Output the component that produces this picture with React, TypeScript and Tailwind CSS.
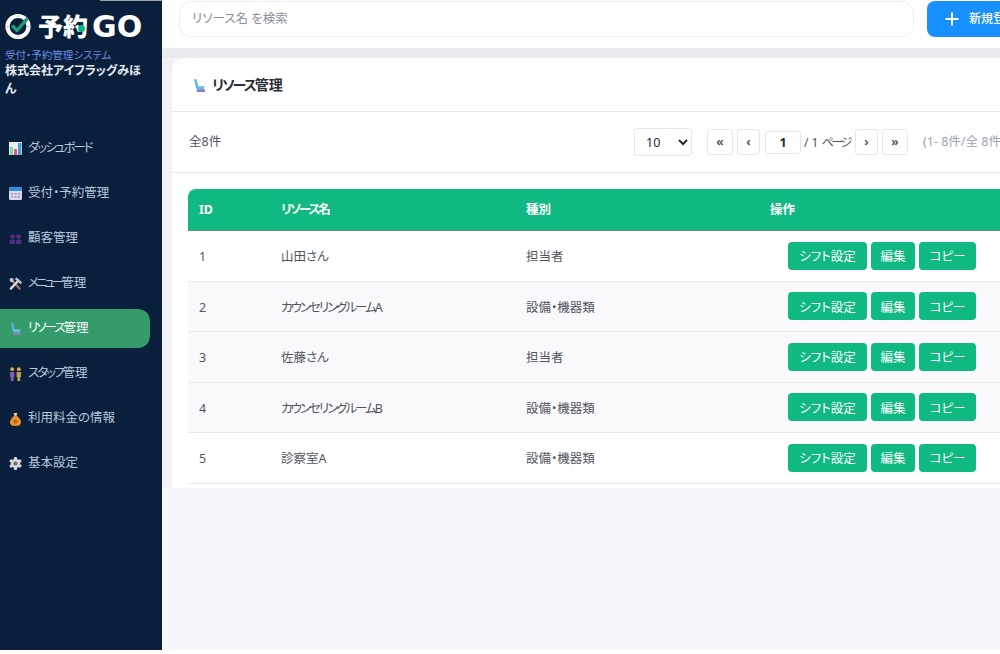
import { ReactNode } from "react";

const font = "font-['Noto_Sans','Noto_Sans_CJK_JP',sans-serif] [font-feature-settings:'palt']";

// kana in the original font is much narrower than in Noto
const Kana = ({ children }: { children: ReactNode }) => <span className="tracking-[-2px]">{children}</span>;

const ChartIcon = () => (
  <svg width="13" height="13" viewBox="0 0 13 13">
    <rect width="13" height="13" fill="#e8eef5" />
    <rect x="1" y="5" width="3" height="8" fill="#7ed6a0" />
    <rect x="5" y="7" width="3" height="6" fill="#ef4f7d" />
    <rect x="9" y="1" width="3.5" height="12" fill="#4a9bd8" />
  </svg>
);

const CalendarIcon = () => (
  <svg width="13" height="13" viewBox="0 0 13 13">
    <rect width="13" height="13" rx="1.5" fill="#d9d8ee" />
    <path d="M0 1.5A1.5 1.5 0 0 1 1.5 0h10A1.5 1.5 0 0 1 13 1.5V4H0z" fill="#2f8fe0" />
    <path d="M2 6h2v1.500H2zM5.500 6h2v1.500h-2zM9 6h2v1.500H9zM2 9h2v1.500H2zM5.500 9h2v1.500h-2zM9 9h2v1.500H9z" fill="#a98fc4" />
  </svg>
);

const PeopleIcon = () => (
  <svg width="13" height="13" viewBox="0 0 13 13" fill="#4f2f86">
    <circle cx="3.500" cy="4.500" r="2.300" />
    <circle cx="9.500" cy="4.500" r="2.300" />
    <path d="M0.500 12V9.500Q0.500 7.500 3 7.500h1Q6 7.500 6 9.500V12zM7 12V9.500Q7 7.500 9 7.500h1q2.500 0 2.500 2V12z" />
  </svg>
);

const ToolsIcon = () => (
  <svg width="14" height="14" viewBox="0 0 14 14" fill="none" strokeLinecap="round">
    <path d="M2.500 2.500 11.500 12" stroke="#a9777a" strokeWidth="2.400" />
    <path d="M2 12 10 3.500" stroke="#d8d8dc" strokeWidth="2.600" />
    <path d="M8 1.500 12.500 5.500" stroke="#c4c4cc" strokeWidth="2.600" />
    <circle cx="2.800" cy="2.800" r="2.200" fill="#c8c8d0" />
  </svg>
);

const SeatIcon = ({ size = 13 }: { size?: number }) => (
  <svg width={size} height={size} viewBox="0 0 13 13" fill="none">
    <path d="M2 1.500 4 1 6 8h5v2.500H5Q4 10.500 3.700 9z" fill="#58b8e6" />
    <path d="M4.500 10.500H12V13H4.500z" fill="#8c7fc0" />
    <path d="M6 7.500h5.500v1.500H6z" fill="#7cc4dc" />
  </svg>
);

const CoupleIcon = () => (
  <svg width="13" height="14" viewBox="0 0 13 14">
    <circle cx="3.200" cy="2.200" r="1.900" fill="#e0a850" />
    <circle cx="9.800" cy="2.200" r="1.900" fill="#e0a850" />
    <path d="M1 5h4.400v5H4.600v4H1.800v-4H1z" fill="#7a62a8" />
    <path d="M7.600 5H12v5h-.8v4H8.400v-4h-.8z" fill="#b9a24e" />
  </svg>
);

const MoneyIcon = () => (
  <svg width="13" height="14" viewBox="0 0 13 14">
    <path d="M4.500 1h4L7.500 4h-2z" fill="#e8c78a" />
    <path d="M5 4h3q4 3 4 6.500Q12 14 6.500 14T1 10.500Q1 7 5 4z" fill="#e9902c" />
    <circle cx="6.500" cy="9.500" r="2" fill="#b8601a" />
  </svg>
);

const GearIcon = () => (
  <svg width="13" height="13" viewBox="0 0 13 13">
    <g fill="#d5d5da">
      <circle cx="6.500" cy="6.500" r="4.700" />
      <rect x="5" y="0" width="3" height="13" rx="0.800" />
      <rect x="5" y="0" width="3" height="13" rx="0.800" transform="rotate(60 6.500 6.500)" />
      <rect x="5" y="0" width="3" height="13" rx="0.800" transform="rotate(120 6.500 6.500)" />
    </g>
    <circle cx="6.500" cy="6.500" r="2" fill="#6b6b75" />
  </svg>
);

const LogoMark = () => (
  <svg width="26" height="27" viewBox="0 0 26 27" fill="none" className="shrink-0">
    <circle cx="13" cy="13.500" r="10.500" stroke="#ffffff" strokeWidth="4.200" />
    <path d="M13 2.500v1.500M13 23v1.500M2 13.500h1.500M22.500 13.500H24" stroke="#8fa0b3" strokeWidth="1" />
    <path d="M8 13.500l4 4L21.500 6.500" stroke="#1f9a73" strokeWidth="3.400" strokeLinecap="round" strokeLinejoin="round" />
  </svg>
);

const menu: { key: string; label: ReactNode; icon: ReactNode; active?: boolean }[] = [
  { key: "dashboard", label: <Kana>ダッシュボード</Kana>, icon: <ChartIcon /> },
  { key: "reserve", label: "受付・予約管理", icon: <CalendarIcon /> },
  { key: "customer", label: "顧客管理", icon: <PeopleIcon /> },
  { key: "menu", label: <><span className="tracking-[-3px]">メニュー</span>管理</>, icon: <ToolsIcon /> },
  { key: "resource", label: <><Kana>リソース</Kana>管理</>, icon: <SeatIcon />, active: true },
  { key: "staff", label: <><Kana>スタッフ</Kana>管理</>, icon: <CoupleIcon /> },
  { key: "fee", label: "利用料金の情報", icon: <MoneyIcon /> },
  { key: "settings", label: "基本設定", icon: <GearIcon /> },
];

const rows: { id: number; name: ReactNode; type: string }[] = [
  { id: 1, name: "山田さん", type: "担当者" },
  { id: 2, name: <><Kana>カウンセリングルーム</Kana>A</>, type: "設備・機器類" },
  { id: 3, name: "佐藤さん", type: "担当者" },
  { id: 4, name: <><Kana>カウンセリングルーム</Kana>B</>, type: "設備・機器類" },
  { id: 5, name: "診察室A", type: "設備・機器類" },
];

const Sidebar = () => (
  <aside className="w-[162px] h-[650px] shrink-0 bg-[#0a1f3c] flex flex-col">
    <div className="h-px ml-[100px] bg-[#9aa3ad]" />
    <div className="pl-[5px] pt-[12px] pr-[20px]">
      <div className="flex items-center h-[27px] text-white leading-none">
        <LogoMark />
        <span className="ml-[7px] text-[25px] font-black relative whitespace-nowrap">
          予約
          <span className="absolute right-[3px] bottom-[7px] w-[7px] h-[7px] rounded-full bg-[#10b981]" />
        </span>
        <span className="ml-[4px] text-[30px] font-bold font-['DejaVu_Sans',sans-serif]">GO</span>
      </div>
      <p className="mt-[8px] text-[10.5px] leading-[14px] text-[#6c8ee0] whitespace-nowrap">受付・予約管理システム</p>
      <p className="text-[12px] leading-[18px] font-bold text-[#e6ebf2]">株式会社アイフラッグみほん</p>
    </div>
    <nav className="mt-[31px] flex flex-col gap-[6px] pr-[12px]">
      {menu.map((item) => (
        <a
          key={item.key}
          className={`h-[39px] flex items-center gap-[6px] pl-[9px] text-[12.5px] rounded-r-xl ${
            item.active ? "bg-[#339c6a] text-white" : "text-[#b9c6dc]"
          }`}
        >
          <span className="w-[13px] flex justify-center">{item.icon}</span>
          <span>{item.label}</span>
        </a>
      ))}
    </nav>
  </aside>
);

const PageButton = ({ children, w }: { children: ReactNode; w: string }) => (
  <button className={`${w} h-[26px] bg-white border border-[#e5e7eb] rounded-[3px] text-[12px] font-bold text-[#555b66] leading-none`}>
    {children}
  </button>
);

const ActionButton = ({ children, w }: { children: ReactNode; w: string }) => (
  <button className={`${w} h-[28px] pt-[3px] bg-[#10b981] text-white text-[12.5px] leading-none rounded-[4px]`}>{children}</button>
);

const Toolbar = () => (
  <div className="h-[61px] border-b border-[#e8e9eb] pl-[17px] flex items-center text-[12.5px] text-[#50555c]">
    <span className="w-[445px] pt-[1px]">全8件</span>
    <select
      defaultValue="10"
      className="w-[58px] h-[28px] bg-white border border-[#e5e7eb] rounded-[3px] pl-[7px] text-[#1f2937] text-[12.5px]"
    >
      <option>10</option>
    </select>
    <div className="ml-[15px] flex items-center gap-[4px]">
      <PageButton w="w-[26px]">«</PageButton>
      <PageButton w="w-[23px]">‹</PageButton>
      <input
        defaultValue="1"
        className="w-[36px] h-[23px] ml-[1px] border border-[#e5e7eb] rounded-[3px] text-center font-bold text-[#1f2937] text-[12.5px]"
      />
      <span className="w-[47px] -ml-[1px] pt-[1px] text-[12px] whitespace-nowrap">
        / 1 <span className="tracking-[-2.500px]">ページ</span>
      </span>
      <PageButton w="w-[23px]">›</PageButton>
      <PageButton w="w-[26px]">»</PageButton>
    </div>
    <span className="ml-[15px] pt-[1px] whitespace-nowrap text-[#9ca3af]">(1- 8件/全 8件)</span>
  </div>
);

const ResourceTable = () => (
  <div className="mt-[16px] ml-[16px] w-[860px]">
    <div className="h-[42px] bg-[#10b981] rounded-tl-lg rounded-tr-lg text-white text-[12.5px] font-bold flex items-center pt-[2px] border-b border-[#5b8f7c]">
      <span className="w-[93px] pl-[11px]">ID</span>
      <span className="w-[245px]"><Kana>リソース</Kana>名</span>
      <span className="w-[244px]">種別</span>
      <span>操作</span>
    </div>
    {rows.map((row, i) => (
      <div
        key={row.id}
        className={`h-[50.500px] flex items-center text-[12.5px] text-[#50555c] border-b border-[#e8e9eb] ${
          i >= 1 && i <= 3 ? "bg-[#f9f9fb]" : "bg-white"
        }`}
      >
        <span className="w-[93px] pl-[11px] pt-[4px]">{row.id}</span>
        <span className="w-[245px] pt-[4px]">{row.name}</span>
        <span className="w-[262px] pt-[4px]">{row.type}</span>
        <div className="flex gap-[4px]">
          <ActionButton w="w-[79px]">シフト設定</ActionButton>
          <ActionButton w="w-[44px]">編集</ActionButton>
          <ActionButton w="w-[57px]">コピー</ActionButton>
        </div>
      </div>
    ))}
  </div>
);

export default function App() {
  return (
    <div className={`w-[1000px] h-[654px] overflow-hidden bg-white flex items-start ${font}`}>
      <Sidebar />
      <main className="w-[900px] h-[650px] shrink-0 bg-[#f5f7fb]">
        <header className="h-[48px] bg-white flex items-start pl-[17px] pt-[1px]">
          <div className="w-[735px] h-[36px] border border-[#eceef0] rounded-xl flex items-center pl-[12px] text-[12.5px] text-[#8b9098]">
            リソース名 を検索
          </div>
          <button className="ml-[13px] w-[130px] h-[36px] bg-[#1890ff] rounded-lg text-white text-[12px] font-medium flex items-center pl-[17px] gap-[9px] whitespace-nowrap">
            <svg width="16" height="16" viewBox="0 0 16 16" stroke="#ffffff" strokeWidth="2">
              <path d="M8 1.500v13M1.500 8h13" />
            </svg>
            新規登録
          </button>
        </header>
        <div className="h-[440px] bg-[#f1f2f4] border-t-[10px] border-[#e9ebee] pl-[10px]">
          <section className="h-[430px] bg-white rounded-tl-xl overflow-hidden">
            <div className="h-[54px] border-b border-[#e8e9eb] pl-[20px] flex items-center gap-[6px] text-[14px] font-bold text-[#2b2f36]">
              <SeatIcon size={14} />
              <span><Kana>リソース</Kana>管理</span>
            </div>
            <Toolbar />
            <ResourceTable />
          </section>
        </div>
      </main>
    </div>
  );
}
